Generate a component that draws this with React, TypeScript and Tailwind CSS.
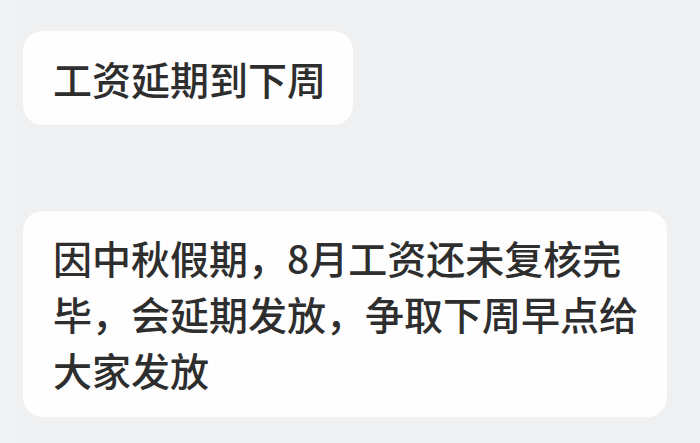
export default function App() {
  const lines = ['因中秋假期，8月工资还未复核完', '毕，会延期发放，争取下周早点给', '大家发放'];

  return (
    <div
      className="w-[700px] h-[443px] bg-[#eff0f2] flex overflow-hidden"
      style={{ fontFamily: '"Noto Sans CJK SC", "Noto Sans", sans-serif' }}
    >
      {/* left edge strip */}
      <div className="w-[16px] h-full bg-[#f2f3f5] shrink-0" />

      <div className="flex flex-col items-start pl-[7px] pt-[31px]">
        <div className="bg-[#fefefe] rounded-[20px] pl-[30px] pr-[27px] py-[19px] text-[39px] leading-[56px] font-medium text-[#2e2e2e] whitespace-nowrap">
          工资延期到下周
        </div>

        <div className="mt-[86px] w-[644px] bg-[#fefefe] rounded-[20px] pl-[30px] pr-[20px] pt-[18px] pb-[20px] text-[39px] leading-[56px] font-medium text-[#2e2e2e]">
          {lines.map((l) => (
            <div key={l} className="whitespace-nowrap">
              {l}
            </div>
          ))}
        </div>
      </div>
    </div>
  );
}
